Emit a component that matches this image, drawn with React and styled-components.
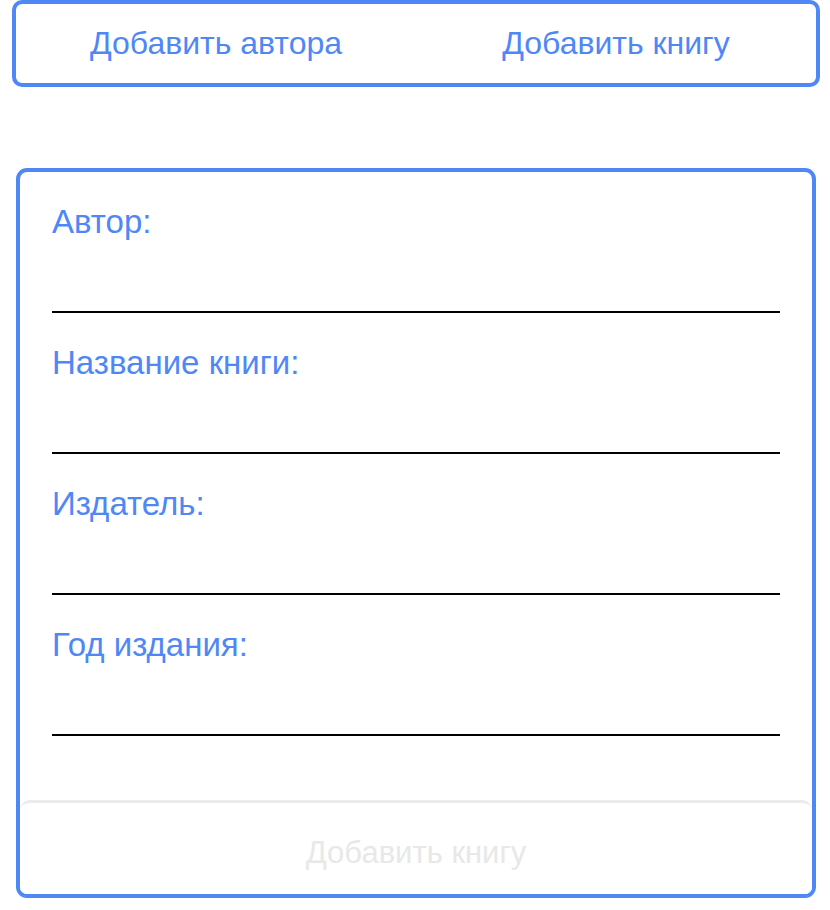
import React, { useState } from "react";
import styled, { createGlobalStyle } from "styled-components";

const GlobalStyle = createGlobalStyle`
  body {
    margin: 0;
    background: #ffffff;
    font-family: "Liberation Sans", Arial, sans-serif;
  }
  * {
    box-sizing: border-box;
  }
`;

const Page = styled("div")`
  width: 830px;
  padding: 0 10px 0 12px;
`;

const Nav = styled("nav")`
  display: flex;
  width: 808px;
  height: 87px;
  border: 4px solid #4f87f6;
  border-radius: 10px;
`;

const NavLink = styled("a")`
  flex: 1;
  display: flex;
  align-items: center;
  justify-content: center;
  font-size: 32px;
  color: #4f87f6;
  text-decoration: none;
  cursor: pointer;
`;

const Form = styled("form")`
  margin: 81px 0 0 4px;
  width: 800px;
  height: 730px;
  display: flex;
  flex-direction: column;
  border: 4px solid #4f87f6;
  border-radius: 11px;
  overflow: hidden;
`;

const Fields = styled("div")`
  padding: 31px 32px 0;
  display: flex;
  flex-direction: column;
  gap: 31px;
`;

const Field = styled("div")`
  display: flex;
  flex-direction: column;
`;

const Label = styled("label")`
  font-size: 33px;
  line-height: 38px;
  color: #4f87f6;
`;

const Input = styled("input")`
  width: 100%;
  height: 72px;
  border: none;
  border-bottom: 2px solid #000000;
  background: transparent;
  outline: none;
  font-family: inherit;
  font-size: 26px;
  padding: 0;
`;

const SubmitButton = styled("button")`
  margin-top: 64px;
  width: 792px;
  height: 110px;
  flex-shrink: 0;
  border: none;
  border-top: 3px solid #ebebeb;
  border-radius: 10px;
  background: #ffffff;
  font-family: inherit;
  font-size: 31px;
  color: #e8e8e8;
  padding: 0 0 8px;
  cursor: default;
`;

const fields = [
  { id: "author", label: "Автор:" },
  { id: "title", label: "Название книги:" },
  { id: "publisher", label: "Издатель:" },
  { id: "year", label: "Год издания:" },
];

export default function App() {
  const [values, setValues] = useState({});

  const onChange = (id) => (e) =>
    setValues({ ...values, [id]: e.target.value });

  const filled = fields.every((f) => values[f.id]);

  return (
    <Page>
      <GlobalStyle />
      <Nav>
        <NavLink>Добавить автора</NavLink>
        <NavLink>Добавить книгу</NavLink>
      </Nav>
      <Form onSubmit={(e) => e.preventDefault()}>
        <Fields>
          {fields.map((f) => (
            <Field key={f.id}>
              <Label htmlFor={f.id}>{f.label}</Label>
              <Input
                id={f.id}
                value={values[f.id] || ""}
                onChange={onChange(f.id)}
              />
            </Field>
          ))}
        </Fields>
        <SubmitButton type="submit" disabled={!filled}>
          Добавить книгу
        </SubmitButton>
      </Form>
    </Page>
  );
}
